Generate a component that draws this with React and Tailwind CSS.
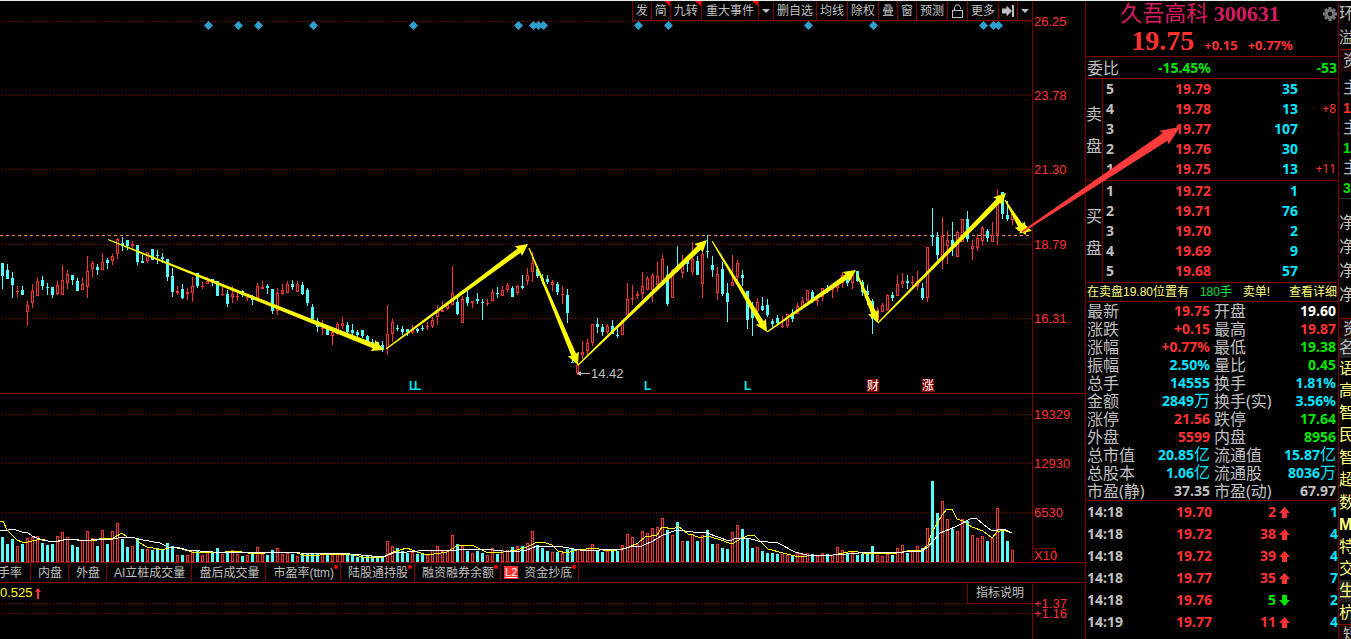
import React from "react";

// Each candle: colour flag (r = rise, c = fall), high, body top, body bottom, low
const CANDLES = `c263 263 276 289,c264 270 279 279,c272 278 285 298,r286 291 292 297,c286 290 295 295,r301 305 312 326,r284 291 303 308,r277 281 296 296,c276 280 286 290,c283 287 288 295,
c287 287 295 298,r281 285 294 295,r265 280 295 295,r270 274 283 289,c275 275 280 285,c278 281 291 291,r277 284 290 290,r256 271 287 298,r261 263 269 278,c264 267 270 275,
r253 262 270 270,c258 260 263 269,r254 256 261 265,r238 239 254 259,c237 243 246 251,c240 240 246 250,r241 244 246 249,c245 245 262 265,c253 261 263 263,r252 252 261 263,
c249 249 260 260,c250 255 256 264,c253 257 259 263,c259 259 277 281,c268 276 292 297,r286 291 293 295,c284 289 298 299,r288 292 294 300,r277 286 293 302,c273 273 286 288,
r282 286 287 289,r277 281 284 284,c279 279 282 286,c281 281 296 296,r287 294 295 296,c290 294 304 307,r286 294 297 303,r291 296 297 301,c290 291 295 297,r294 297 298 301,
c295 298 300 305,r283 286 298 298,r281 287 289 289,c284 286 288 294,c289 289 311 314,r288 293 311 315,r284 290 294 295,r281 284 293 293,c280 284 287 290,r281 284 292 292,
c282 285 294 295,c288 290 303 306,c304 307 319 322,c318 321 327 332,r320 328 329 335,c325 326 335 335,r327 332 336 345,r322 324 334 335,r317 323 326 329,c322 325 332 334,
c324 330 333 336,c330 332 335 337,c330 330 336 338,c335 336 342 342,c339 342 343 345,c342 342 346 348,c341 345 350 352,r305 334 348 355,r319 322 334 342,c325 328 329 331,
c326 329 332 335,c329 329 332 336,r325 330 333 334,c328 329 331 333,c325 328 329 331,r322 326 327 330,r317 320 326 328,r305 312 317 325,r301 310 312 312,r303 305 309 310,
r266 293 305 305,c298 302 314 315,r296 299 323 323,c291 297 303 306,r301 301 303 308,c293 299 301 304,c299 302 303 320,r299 303 304 306,r289 292 301 301,c287 293 294 298,
r286 290 296 296,r283 285 290 292,c286 288 297 297,r285 286 293 295,c275 286 288 289,r268 275 281 285,r252 263 272 282,c266 269 276 278,c274 278 281 284,c275 279 282 284,
r280 282 285 291,c282 284 292 295,r286 294 295 304,c289 295 313 323,c355 362 363 363,r358 365 373 375,r341 352 355 359,r339 343 351 356,r324 324 343 346,c318 324 327 333,
c324 327 332 336,r324 326 332 334,c320 326 334 334,c327 335 336 338,r320 320 335 335,r283 299 315 315,r285 298 299 305,r291 294 296 299,r272 286 294 299,r276 278 290 290,
r273 275 290 302,r262 276 285 289,r255 259 281 281,c266 275 304 306,r269 270 298 298,c246 266 270 272,r255 265 273 278,c257 260 264 272,r242 259 272 275,c256 261 275 275,
r248 254 284 298,c235 251 252 258,c256 265 270 277,r267 274 293 300,c262 269 294 296,c283 293 302 322,r255 282 286 286,r260 263 277 283,c270 275 278 286,c291 291 320 329,
c302 310 318 336,r298 302 311 314,c297 306 310 311,c299 305 315 317,c319 321 324 327,c315 318 323 325,r316 326 327 328,r314 314 326 328,c309 313 319 322,r303 306 314 314,
r297 301 307 307,r290 290 301 301,c290 292 301 303,r297 300 301 306,r288 288 297 301,c285 288 290 293,r286 288 290 298,r280 285 288 292,r272 275 283 288,c275 277 283 286,
r272 275 283 289,c271 271 281 282,c280 282 292 296,c285 291 295 305,c299 301 319 334,r307 311 320 320,r303 305 312 312,r294 295 310 311,c292 295 298 301,r275 284 296 296,
r273 281 284 288,c275 281 283 289,r276 282 283 286,r271 281 286 290,c283 288 298 300,r247 247 298 302,c208 235 237 246,c232 237 255 260,r217 236 260 269,r231 240 246 264,
c222 240 246 256,r231 232 257 257,r219 219 242 242,c211 219 239 242,r240 246 249 260,r234 238 248 251,r226 228 241 245,c229 231 238 242,r222 235 242 242,r189 202 234 245,
c192 192 214 219,c201 215 219 221,r212 214 220 225`
  .split(",")
  .map((s) => s.trim())
  .map((s) => ({ up: s[0] === "r", v: s.slice(1).split(" ").map(Number) }));

const VOLUMES = [
  25, 18, 23, 16, 18, 24, 25, 26, 19, 17, 18, 26, 30, 25, 17, 15, 22, 31, 24, 16, 32, 18, 31, 39, 23, 15, 16, 23, 13, 13,
  12, 14, 12, 19, 16, 7, 7, 7, 12, 11, 7, 11, 9, 14, 8, 9, 12, 8, 6, 7, 8, 15, 8, 7, 12, 14, 8, 9, 8, 6,
  9, 9, 9, 9, 8, 7, 9, 8, 7, 8, 7, 5, 5, 6, 6, 4, 5, 21, 16, 14, 11, 9, 10, 8, 8, 7, 12, 16, 11, 11,
  27, 18, 16, 11, 9, 11, 9, 7, 14, 8, 12, 12, 15, 16, 16, 19, 31, 17, 14, 11, 10, 10, 9, 13, 14, 13, 13, 14, 18, 11,
  10, 11, 11, 11, 17, 28, 25, 18, 31, 29, 34, 35, 44, 32, 27, 40, 21, 21, 28, 21, 27, 32, 18, 18, 14, 13, 30, 37, 33, 23,
  14, 15, 11, 9, 9, 8, 8, 7, 6, 9, 8, 9, 8, 6, 9, 8, 7, 15, 12, 9, 10, 7, 8, 8, 16, 7, 6, 8, 7, 14,
  17, 9, 11, 16, 14, 34, 81, 49, 61, 43, 33, 31, 43, 41, 27, 24, 26, 21, 24, 54, 32, 21, 12,
];

const MA_FAST =
  "0,521 3,521 7,530 12,535 17,540 22,542 28,542 32,541 42,539 48,541 52,542 60,541 67,539 75,539 82,541 87,540 97,540 102,538 113,538 122,533 127,537 135,538 140,543 147,547 153,548 162,550 172,547 182,549 192,552 200,553 213,552 225,552 237,551 253,554 277,552 297,553 303,555 320,555 350,554 363,557 383,557 393,552 407,548 417,552 428,555 447,552 457,546 472,545 480,549 488,553 503,552 517,550 527,547 537,542 543,542 552,545 558,551 567,553 577,550 595,548 603,550 617,550 627,548 638,543 645,537 657,535 662,527 673,529 678,526 688,534 693,535 700,538 707,536 718,539 732,544 742,538 750,535 755,536 762,543 768,549 783,553 795,556 807,556 833,555 853,551 867,554 897,553 907,551 922,550 928,545 932,532 942,515 947,509 952,509 957,519 963,521 972,527 983,531 992,538 997,532 1003,530 1012,533";
const MA_SLOW =
  "0,530 8,530 13,529 22,532 27,532 32,536 42,540 53,542 63,540 72,539 83,541 100,539 113,539 123,537 135,538 143,540 160,543 168,547 180,548 187,550 213,552 233,552 253,553 277,552 300,553 350,554 383,557 393,553 407,552 430,550 447,551 467,549 483,549 493,550 513,552 527,550 537,546 563,547 580,550 600,550 623,549 633,546 642,546 653,541 663,535 677,530 693,532 705,532 715,536 729,541 737,538 748,538 758,541 778,543 795,552 807,555 833,555 872,552 887,553 922,551 928,547 940,533 955,527 972,518 977,519 983,524 992,531 1003,529 1008,531 1012,533";

const RED = "#ff3232";
const CYAN = "#54fcfc";
const LINE = "#800000";

function Arrow({ from, to, color = "#ffff00", head = 12, half = 6, neck = 2.6, tail = 0.6 }) {
  const dx = to[0] - from[0];
  const dy = to[1] - from[1];
  const len = Math.hypot(dx, dy);
  const at = (along, side) =>
    `${from[0] + (dx * along - dy * side) / len},${from[1] + (dy * along + dx * side) / len}`;
  const points = [
    at(0, tail),
    at(len - head + 1, neck),
    at(len - head, half),
    at(len, 0),
    at(len - head, -half),
    at(len - head + 1, -neck),
    at(0, -tail),
  ].join(" ");
  return <polygon points={points} fill={color} />;
}

function Grid({ rows }) {
  return rows.map(([y, label]) => (
    <g key={label}>
      <line x1="2" x2="1032" y1={y + 0.5} y2={y + 0.5} stroke={LINE} strokeDasharray="1 2" shapeRendering="crispEdges" />
      <text x="1034" y={y + 5} fill={RED} fontSize="13">{label}</text>
    </g>
  ));
}

function PriceChart() {
  return (
    <svg width="1085" height="392" viewBox="0 1 1085 392" className="block shrink-0">
      <Grid rows={[[21, "26.25"], [95, "23.78"], [169, "21.30"], [244, "18.79"], [318, "16.31"]]} />
      <line x1="0" x2="1029" y1="235.5" y2="235.5" stroke="#ff8c30" strokeDasharray="3 3" shapeRendering="crispEdges" />
      <line x1="1032.5" x2="1032.5" y1="0" y2="393" stroke={LINE} />
      {[208, 238, 258, 313, 413, 518, 533, 538, 543, 638, 668, 808, 873, 983, 993, 998].map((x) => (
        <path key={x} d={`M${x + 0.5} 21l4.5 4.5-4.5 4.5-4.5-4.5z`} fill="#2f9fd0" />
      ))}
      <g shapeRendering="crispEdges">
        {CANDLES.map(({ up, v: [hi, top, bottom, lo] }, i) => {
          const x = 1 + i * 5;
          const h = bottom - top;
          if (!up)
            return (
              <g key={i} fill={CYAN}>
                <rect x={x + 1} y={hi} width="1" height={lo - hi} />
                <rect x={x} y={top} width="3" height={h} />
              </g>
            );
          return (
            <g key={i} fill={RED}>
              <rect x={x + 1} y={hi} width="1" height={top - hi} />
              <rect x={x + 1} y={bottom} width="1" height={lo - bottom} />
              <rect x={x} y={top} width="3" height={h} />
              {h > 2 && <rect x={x + 1} y={top + 1} width="1" height={h - 2} fill="#000" />}
            </g>
          );
        })}
      </g>
      <Arrow from={[108, 239.5]} to={[384, 350]} />
      <Arrow from={[386, 349]} to={[528, 244]} />
      <Arrow from={[529, 248]} to={[578, 365]} />
      <Arrow from={[578, 365]} to={[707, 240]} />
      <Arrow from={[712, 241]} to={[767, 332]} />
      <Arrow from={[767, 332]} to={[856, 270]} />
      <Arrow from={[857, 274]} to={[878, 323]} />
      <Arrow from={[878, 323]} to={[1006, 193]} />
      <Arrow from={[1005, 200]} to={[1026, 235]} />
      <Arrow from={[1018, 227]} to={[1032, 231]} neck={4} tail={3} />
      <path d="M577 373.5l4-2.5v2h9v1h-9v2z" fill="#c0c0c0" />
      <text x="591" y="378" fontSize="13" fill="#c0c0c0">14.42</text>
      <g fill="#00e5e5" fontSize="12" fontWeight="bold">
        <text x="409" y="390">L</text>
        <text x="414" y="390">L</text>
        <text x="644" y="390">L</text>
        <text x="744" y="390">L</text>
      </g>
      <rect x="867" y="379" width="12" height="13" fill={LINE} />
      <rect x="922" y="379" width="12" height="13" fill={LINE} />
      <g fill="#fff" fontSize="12">
        <text x="867" y="390">财</text>
        <text x="922" y="390">涨</text>
      </g>
    </svg>
  );
}

function VolumeChart() {
  return (
    <svg width="1085" height="168" viewBox="0 394 1085 168" className="block shrink-0">
      <Grid rows={[[414, "19329"], [463, "12930"], [512, "6530"]]} />
      <line x1="1032.5" x2="1032.5" y1="394" y2="562" stroke={LINE} />
      <rect x="1032.5" y="548.5" width="23" height="14" fill="none" stroke={LINE} />
      <text x="1034" y="560" fill={RED} fontSize="13">X10</text>
      <g shapeRendering="crispEdges">
        {VOLUMES.map((h, i) =>
          CANDLES[i].up ? (
            <rect key={i} x={1.5 + i * 5} y={562.5 - h} width="2" height={h - 1} fill="none" stroke={RED} />
          ) : (
            <rect key={i} x={1 + i * 5} y={562 - h} width="3" height={h} fill={CYAN} />
          )
        )}
        <polyline points={MA_FAST} fill="none" stroke="#ffff00" />
        <polyline points={MA_SLOW} fill="none" stroke="#fff" />
      </g>
    </svg>
  );
}

function Caret() {
  return (
    <svg width="8" height="4" viewBox="0 0 8 4" className="block">
      <path d="M0 0h8L4 4z" fill="#c0c0c0" />
    </svg>
  );
}

const TOOLS = [
  { label: "发" },
  { label: "简", hot: true },
  { label: "九转", hot: true },
  { label: "重大事件", hot: true, wide: true },
  { label: "展开事件", icon: <Caret /> },
  { label: "删自选" },
  { label: "均线" },
  { label: "除权" },
  { label: "叠" },
  { label: "窗" },
  { label: "预测" },
  {
    label: "锁定",
    icon: (
      <svg width="13" height="14" viewBox="0 0 13 14" className="block" fill="none" stroke="#c0c0c0">
        <rect x="1.5" y="6.5" width="10" height="7" />
        <path d="M3.5 6.500V3.500L5 1h3l1.500 2.500V5" />
      </svg>
    ),
  },
  { label: "更多" },
  {
    label: "跳到最新",
    icon: (
      <svg width="12" height="12" viewBox="0 0 12 12" className="block" fill="#c0c0c0">
        <path d="M0 3.500h4.500V0.500L10 6l-5.500 5.500V8.500H0zM10 0h2v12h-2z" />
      </svg>
    ),
  },
  { label: "展开", icon: <Caret /> },
];

function Toolbar() {
  return (
    <div className="absolute top-0 right-[52px] flex h-5 border-r border-b border-[#800000] bg-black">
      {TOOLS.map((t) => (
        <button
          key={t.label}
          aria-label={t.label}
          className={`relative flex items-center border-l border-[#800000] text-xs leading-none whitespace-nowrap ${t.wide ? "px-1" : "px-[3px]"}`}
        >
          {t.icon || t.label}
          {t.hot && (
            <svg width="6" height="5" viewBox="0 0 6 5" className="absolute top-0 right-0">
              <path d="M0 0h6v5z" fill="#ff0000" />
            </svg>
          )}
        </button>
      ))}
    </div>
  );
}

const TABS = [
  ["内盘"],
  ["外盘"],
  ["AI立桩成交量"],
  ["盘后成交量"],
  ["市盈率(ttm)", true],
  ["陆股通持股", true],
  ["融资融券余额", true],
  ["资金抄底", true],
];

function Tabs() {
  return (
    <nav className="flex h-5 shrink-0 border-b border-[#800000] text-xs leading-none">
      <button className="flex w-[31px] items-center justify-end overflow-hidden border-r border-[#800000] pr-2 whitespace-nowrap">
        手率
      </button>
      {TABS.map(([label, dot]) => (
        <button key={label} className="relative flex items-center gap-[6px] border-r border-[#800000] pr-[6px] pl-[7px] whitespace-nowrap">
          {label === "资金抄底" && (
            <span className="-ml-1 bg-[#ff3232] px-px py-px text-[11px] text-white underline underline-offset-1">L2</span>
          )}
          {label}
          {dot && <span className="absolute top-[2px] right-[2px] size-1 rounded-full bg-[#ff0000]" />}
        </button>
      ))}
    </nav>
  );
}

function IndicatorPane() {
  return (
    <section className="relative flex min-h-0 flex-1 justify-end overflow-hidden">
      <svg width="1085" height="56" viewBox="0 583 1085 56" className="block shrink-0">
        <Grid rows={[[603, "+1.37"], [613, "+1.16"]]} />
      </svg>
      <div className="absolute inset-0 mr-[52px] flex items-start justify-between border-r border-[#800000]">
        <span className="flex items-center gap-[2px] text-[13px] leading-5 text-[#ffff00]">
          0.525
          <svg width="6" height="11" viewBox="0 0 6 11">
            <path d="M3 0l3 4H4v7H2V4H0z" fill={RED} />
          </svg>
        </span>
        <button className="border-b border-l border-[#800000] bg-black px-2 text-xs leading-5">指标说明</button>
      </div>
    </section>
  );
}

const ASKS = [["5", "19.79", "35"], ["4", "19.78", "13", "+8"], ["3", "19.77", "107"], ["2", "19.76", "30"], ["1", "19.75", "13", "+11"]];
const BIDS = [["1", "19.72", "1"], ["2", "19.71", "76"], ["3", "19.70", "2"], ["4", "19.69", "9"], ["5", "19.68", "57"]];

function Book({ side, rows }) {
  return (
    <section className="flex shrink-0 border-b border-[#800000]">
      <div className="flex w-[18px] flex-col items-center justify-center border-r border-[#800000] text-base leading-8">
        <span>{side}</span>
        <span>盘</span>
      </div>
      <table className="mb-px w-full table-fixed text-right text-sm leading-5 font-bold">
        <tbody>
          {rows.map(([level, price, qty, change]) => (
            <tr key={level} className="h-5">
              <th className="w-[20px] p-0 pl-[3px] text-left">{level}</th>
              <td className="w-[88px] p-0 text-[#ff3232]">{price}</td>
              <td className="w-[87px] p-0 text-[#00e5ff]">{qty}</td>
              <td className="p-0 pr-[2px] text-xs leading-5 font-normal text-[#ff3232]">{change}</td>
            </tr>
          ))}
        </tbody>
      </table>
    </section>
  );
}

const R = "text-[#ff3232]";
const G = "text-[#00e600]";
const C = "text-[#00e5ff]";
const STATS = [
  ["最新", "19.75", R, "开盘", "19.60", "text-white"],
  ["涨跌", "+0.15", R, "最高", "19.87", R],
  ["涨幅", "+0.77%", R, "最低", "19.38", G],
  ["振幅", "2.50%", C, "量比", "0.45", G],
  ["总手", "14555", C, "换手", "1.81%", C],
  ["金额", "2849万", C, "换手(实)", "3.56%", C],
  ["涨停", "21.56", R, "跌停", "17.64", G],
  ["外盘", "5599", R, "内盘", "8956", G],
  ["总市值", "20.85亿", C, "流通值", "15.87亿", C],
  ["总股本", "1.06亿", C, "流通股", "8036万", C],
  ["市盈(静)", "37.35", "", "市盈(动)", "67.97", ""],
];

function Figure({ value }) {
  const unit = /[万亿]$/.test(value) ? value.slice(-1) : "";
  return (
    <>
      {unit ? value.slice(0, -1) : value}
      {unit && <span className="text-base leading-none font-normal">{unit}</span>}
    </>
  );
}

const TRADES = [
  ["14:18", "19.70", "2", true, "1"],
  ["14:18", "19.72", "38", true, "4"],
  ["14:18", "19.72", "39", true, "4"],
  ["14:18", "19.77", "35", true, "7"],
  ["14:18", "19.76", "5", false, "2"],
  ["14:19", "19.77", "11", true, "4"],
  ["14:19", "19.77", "18", true, "2"],
];

function Gear() {
  return (
    <svg width="14" height="14" viewBox="-7 -7 14 14" className="block">
      <g fill="#777">
        {[0, 45, 90, 135].map((a) => (
          <rect key={a} x="-1.600" y="-7" width="3.200" height="14" transform={`rotate(${a})`} />
        ))}
        <circle r="5" />
      </g>
      <circle r="2.200" fill="#000" />
    </svg>
  );
}

function QuotePanel() {
  return (
    <aside className="flex w-[254px] shrink-0 flex-col overflow-hidden border-x border-[#800000] font-['Noto_Sans','Noto_Sans_CJK_SC',sans-serif]">
      <header className="relative h-14 shrink-0 border-b border-[#800000]">
        <h1 className="pr-6 text-center font-['Liberation_Serif','Noto_Sans_CJK_SC',serif] text-[22px] leading-[26px] text-[#d81b60]">
          久吾高科 <span className="font-bold">300631</span>
        </h1>
        <p className="flex items-baseline justify-center gap-[10px] text-[13px] leading-7 font-bold text-[#ff3232]">
          <span className="font-['Liberation_Serif',serif] text-[28px]">19.75</span>
          <span>+0.15</span>
          <span>+0.77%</span>
        </p>
        <button aria-label="设置" className="absolute top-[6px] right-px">
          <Gear />
        </button>
      </header>
      <div className="flex h-[22px] shrink-0 items-center border-b border-[#800000] pr-px pl-px text-sm leading-5 font-bold text-[#00e600]">
        <span className="w-[36px] text-base leading-5 font-normal text-[#c0c0c0]">委比</span>
        <span className="w-[88px] text-right">-15.45%</span>
        <span className="flex-1 text-right">-53</span>
      </div>
      <Book side="卖" rows={ASKS} />
      <Book side="买" rows={BIDS} />
      <div className="flex h-[19px] shrink-0 items-center justify-between border-b border-[#800000] px-px font-['Liberation_Sans','Noto_Sans_CJK_SC',sans-serif] text-xs whitespace-nowrap text-[#ffff80]">
        <span>在卖盘19.80位置有</span>
        <span className="text-[#00e040]">180手</span>
        <span>卖单!</span>
        <a href="#detail" className="pl-2">查看详细</a>
      </div>
      <div className="shrink-0 border-b border-[#800000]">
        <table className="w-full table-fixed text-sm leading-[18px] font-bold whitespace-nowrap">
          <tbody>
            {STATS.map(([a, av, ac, b, bv, bc]) => (
              <tr key={a} className="h-[18px]">
                <th className="w-[60px] p-0 pl-px text-left text-base leading-[18px] font-normal">{a}</th>
                <td className={`w-[64px] p-0 text-right ${ac}`}><Figure value={av} /></td>
                <th className="w-[64px] p-0 pl-1 text-left text-base leading-[18px] font-normal">{b}</th>
                <td className={`p-0 pr-[2px] text-right ${bc}`}><Figure value={bv} /></td>
              </tr>
            ))}
          </tbody>
        </table>
      </div>
      <table className="w-full shrink-0 table-fixed text-right text-sm leading-[22px] font-bold">
        <tbody>
          {TRADES.map(([time, price, qty, up, count], i) => (
            <tr key={i} className="h-[22px]">
              <td className="w-[44px] p-0 pl-px text-left">{time}</td>
              <td className={`w-[82px] p-0 ${R}`}>{price}</td>
              <td className={`w-[64px] p-0 ${up ? R : G}`}>{qty}</td>
              <td className="w-[20px] p-0 pl-[3px]">
                <svg width="11" height="11" viewBox="0 0 11 11" className="block">
                  <path
                    d={up ? "M5.500 0L11 6H8v5H3V6H0z" : "M5.500 11L11 5H8V0H3v5H0z"}
                    fill={up ? RED : "#00e600"}
                  />
                </svg>
              </td>
              <td className={`p-0 ${C}`}>{count}</td>
            </tr>
          ))}
        </tbody>
      </table>
    </aside>
  );
}

const SIDE = [
  ["环", "h-[25px]"],
  ["溢", "h-6 border-b border-[#800000]"],
  ["资", "h-[22px] pl-1 bg-[#1c0808]"],
  ["主", "h-[26px] pt-[5px] pl-1"],
  ["1", "h-5 pl-1 text-sm font-bold text-[#ff3232]"],
  ["主", "h-5 pl-1"],
  ["1", "h-5 pl-1 text-sm font-bold text-[#00e600]"],
  ["主", "h-5 pl-1"],
  ["3", "h-5 pl-1 text-sm font-bold text-[#00e600]"],
  ["净", "h-[37px] border-t border-[#333] pt-3"],
  ["净", "h-6"],
  ["净", "h-6"],
  ["净", "h-6"],
  ["资", "mt-[11px] h-5 border-t border-[#800000] pl-1 bg-[#1c0808]"],
  ["名", "h-5 bg-[#222]"],
  ["语", "h-[22px] text-[#ffff80]"],
  ["高", "h-[22px] text-[#ffff80]"],
  ["智", "h-[22px] text-[#ffff80]"],
  ["民", "h-[22px] text-[#ffff80]"],
  ["智", "h-[23px] text-[#ffff80]"],
  ["超", "h-[22px] text-[#ffff80]"],
  ["数", "h-[23px] text-[#ffff80]"],
  ["M", "h-[22px] font-bold text-[#ffff80]"],
  ["特", "h-[22px] text-[#ffff80]"],
  ["交", "h-[22px] text-[#ffff80]"],
  ["生", "h-[22px] bg-[#222] text-[#ffff80]"],
  ["杭", "h-[22px] text-[#ffff80]"],
  ["短", "h-5 border-t border-[#800000] pl-1 bg-[#1c0808]"],
];

function SideList() {
  return (
    <ul className="w-3 shrink-0 overflow-hidden text-base leading-none">
      {SIDE.map(([text, style], i) => (
        <li key={i} className={`flex items-center overflow-hidden whitespace-nowrap ${style}`}>
          <span className="shrink-0">{text}</span>
        </li>
      ))}
    </ul>
  );
}

export default function App() {
  return (
    <main className="relative flex h-screen overflow-hidden border-t border-[#e4ece8] bg-black font-['Liberation_Sans','Noto_Sans_CJK_SC',sans-serif] text-[#c0c0c0]">
      <div className="flex min-w-0 flex-1 flex-col">
        <section className="relative flex shrink-0 justify-end overflow-hidden border-b border-[#800000]">
          <PriceChart />
          <Toolbar />
        </section>
        <section className="flex shrink-0 justify-end overflow-hidden border-b border-[#800000]">
          <VolumeChart />
        </section>
        <Tabs />
        <IndicatorPane />
      </div>
      <QuotePanel />
      <SideList />
      <svg width="175" height="120" viewBox="1016 120 175 120" className="pointer-events-none absolute top-[119px] right-[160px]">
        <Arrow from={[1022, 232]} to={[1180, 127]} color="#ff3b3b" head={19} half={8} neck={4.5} tail={0.8} />
      </svg>
    </main>
  );
}
